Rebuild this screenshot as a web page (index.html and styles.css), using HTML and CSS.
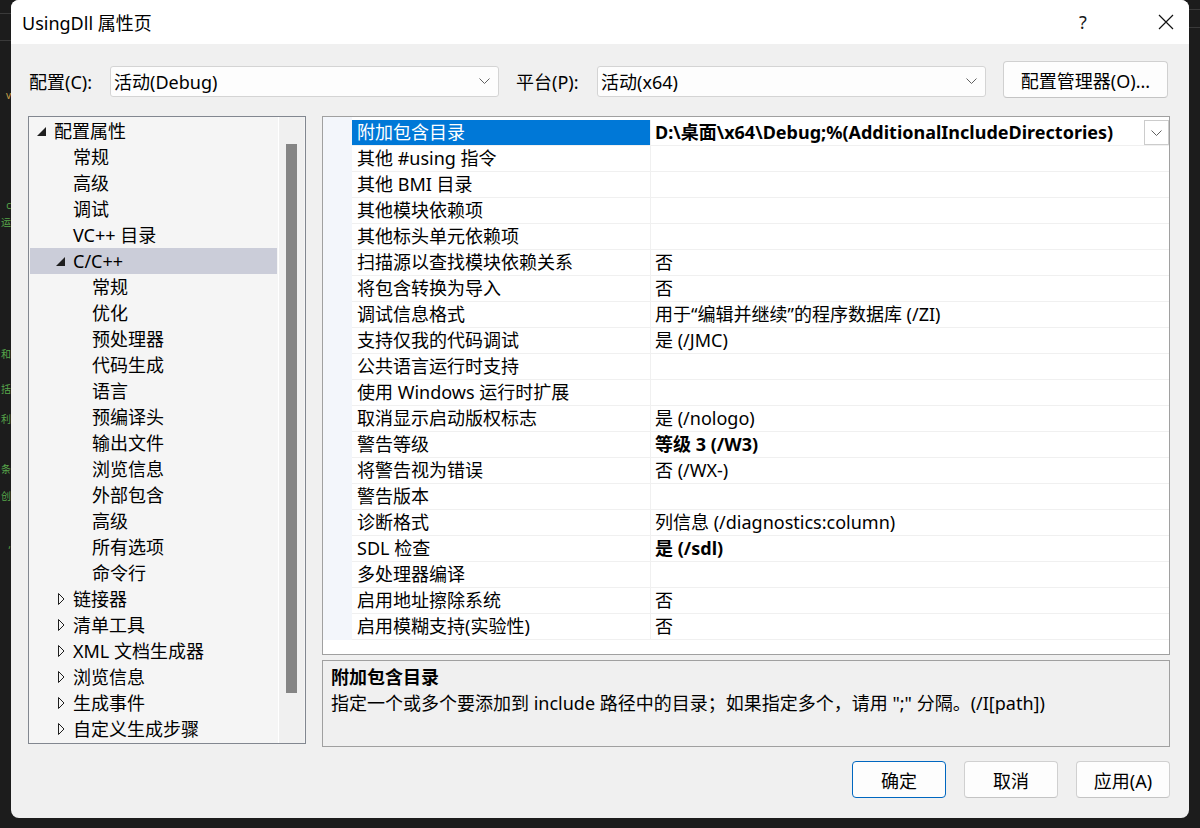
FILE: index.html
```html
<!DOCTYPE html>
<html lang="zh-CN">
<head>
    <meta charset="UTF-8">
    <title>UsingDll 属性页</title>
    <link rel="stylesheet" href="styles.css">
</head>
<body>
<div class="desk">
    <div class="edge edge-left">
        <div class="code-line warm">v</div>
        <div class="code-line">c</div>
        <div class="code-line">运</div>
        <div class="code-line">和</div>
        <div class="code-line">括</div>
        <div class="code-line">利</div>
        <div class="code-line">条</div>
        <div class="code-line">创</div>
        <div class="code-line">,</div>
    </div>

    <div class="dialog">
        <div class="titlebar">
            <span class="title">UsingDll 属性页</span>
            <span class="cap-btn help">?</span>
            <span class="cap-btn close">
                <svg width="16" height="16" viewBox="0 0 16 16"><path d="M1 1L15 15M15 1L1 15" stroke="#111" stroke-width="1.2" fill="none"/></svg>
            </span>
        </div>

        <div class="content">
            <div class="config-row">
                <label class="cfg-label">配置(C):</label>
                <div class="combo">
                    <span>活动(Debug)</span>
                    <svg class="chev" width="11" height="6" viewBox="0 0 11 6"><path d="M0.5 0.5L5.5 5.5L10.5 0.5" stroke="#606060" fill="none"/></svg>
                </div>
                <label class="cfg-label second">平台(P):</label>
                <div class="combo">
                    <span>活动(x64)</span>
                    <svg class="chev" width="11" height="6" viewBox="0 0 11 6"><path d="M0.5 0.5L5.5 5.5L10.5 0.5" stroke="#606060" fill="none"/></svg>
                </div>
                <button class="btn cfg-manager">配置管理器(O)...</button>
            </div>

            <div class="main">
                <div class="tree">
                    <ul class="tree-list">
                        <li class="node lv0"><span class="twist"><svg class="open" width="9" height="9" viewBox="0 0 9 9"><path d="M9 0L9 9L0 9Z" fill="#1e1e1e"/></svg></span>配置属性</li>
                        <li class="node lv1"><span class="twist"></span>常规</li>
                        <li class="node lv1"><span class="twist"></span>高级</li>
                        <li class="node lv1"><span class="twist"></span>调试</li>
                        <li class="node lv1"><span class="twist"></span>VC++ 目录</li>
                        <li class="node lv1 selected"><span class="twist"><svg class="open" width="9" height="9" viewBox="0 0 9 9"><path d="M9 0L9 9L0 9Z" fill="#1e1e1e"/></svg></span>C/C++</li>
                        <li class="node lv2"><span class="twist"></span>常规</li>
                        <li class="node lv2"><span class="twist"></span>优化</li>
                        <li class="node lv2"><span class="twist"></span>预处理器</li>
                        <li class="node lv2"><span class="twist"></span>代码生成</li>
                        <li class="node lv2"><span class="twist"></span>语言</li>
                        <li class="node lv2"><span class="twist"></span>预编译头</li>
                        <li class="node lv2"><span class="twist"></span>输出文件</li>
                        <li class="node lv2"><span class="twist"></span>浏览信息</li>
                        <li class="node lv2"><span class="twist"></span>外部包含</li>
                        <li class="node lv2"><span class="twist"></span>高级</li>
                        <li class="node lv2"><span class="twist"></span>所有选项</li>
                        <li class="node lv2"><span class="twist"></span>命令行</li>
                        <li class="node lv1"><span class="twist"><svg class="shut" width="7" height="12" viewBox="0 0 7 12"><path d="M0.5 0.5L6 6L0.5 11.5Z" stroke="#1e1e1e" fill="none"/></svg></span>链接器</li>
                        <li class="node lv1"><span class="twist"><svg class="shut" width="7" height="12" viewBox="0 0 7 12"><path d="M0.5 0.5L6 6L0.5 11.5Z" stroke="#1e1e1e" fill="none"/></svg></span>清单工具</li>
                        <li class="node lv1"><span class="twist"><svg class="shut" width="7" height="12" viewBox="0 0 7 12"><path d="M0.5 0.5L6 6L0.5 11.5Z" stroke="#1e1e1e" fill="none"/></svg></span>XML 文档生成器</li>
                        <li class="node lv1"><span class="twist"><svg class="shut" width="7" height="12" viewBox="0 0 7 12"><path d="M0.5 0.5L6 6L0.5 11.5Z" stroke="#1e1e1e" fill="none"/></svg></span>浏览信息</li>
                        <li class="node lv1"><span class="twist"><svg class="shut" width="7" height="12" viewBox="0 0 7 12"><path d="M0.5 0.5L6 6L0.5 11.5Z" stroke="#1e1e1e" fill="none"/></svg></span>生成事件</li>
                        <li class="node lv1"><span class="twist"><svg class="shut" width="7" height="12" viewBox="0 0 7 12"><path d="M0.5 0.5L6 6L0.5 11.5Z" stroke="#1e1e1e" fill="none"/></svg></span>自定义生成步骤</li>
                    </ul>
                    <div class="vscroll"><div class="thumb"></div></div>
                </div>

                <div class="right-col">
                    <div class="grid">
                        <div class="prop-list">
                            <div class="prop active">
                                <div class="name">附加包含目录</div>
                                <div class="value bold">D:\桌面\x64\Debug;%(AdditionalIncludeDirectories)
                                    <span class="drop"><svg width="11" height="6" viewBox="0 0 11 6"><path d="M0.5 0.5L5.5 5.5L10.5 0.5" stroke="#606060" fill="none"/></svg></span>
                                </div>
                            </div>
                            <div class="prop"><div class="name">其他 #using 指令</div><div class="value"></div></div>
                            <div class="prop"><div class="name">其他 BMI 目录</div><div class="value"></div></div>
                            <div class="prop"><div class="name">其他模块依赖项</div><div class="value"></div></div>
                            <div class="prop"><div class="name">其他标头单元依赖项</div><div class="value"></div></div>
                            <div class="prop"><div class="name">扫描源以查找模块依赖关系</div><div class="value">否</div></div>
                            <div class="prop"><div class="name">将包含转换为导入</div><div class="value">否</div></div>
                            <div class="prop"><div class="name">调试信息格式</div><div class="value">用于“编辑并继续”的程序数据库 (/ZI)</div></div>
                            <div class="prop"><div class="name">支持仅我的代码调试</div><div class="value">是 (/JMC)</div></div>
                            <div class="prop"><div class="name">公共语言运行时支持</div><div class="value"></div></div>
                            <div class="prop"><div class="name">使用 Windows 运行时扩展</div><div class="value"></div></div>
                            <div class="prop"><div class="name">取消显示启动版权标志</div><div class="value">是 (/nologo)</div></div>
                            <div class="prop"><div class="name">警告等级</div><div class="value bold">等级 3 (/W3)</div></div>
                            <div class="prop"><div class="name">将警告视为错误</div><div class="value">否 (/WX-)</div></div>
                            <div class="prop"><div class="name">警告版本</div><div class="value"></div></div>
                            <div class="prop"><div class="name">诊断格式</div><div class="value">列信息 (/diagnostics:column)</div></div>
                            <div class="prop"><div class="name">SDL 检查</div><div class="value bold">是 (/sdl)</div></div>
                            <div class="prop"><div class="name">多处理器编译</div><div class="value"></div></div>
                            <div class="prop"><div class="name">启用地址擦除系统</div><div class="value">否</div></div>
                            <div class="prop"><div class="name">启用模糊支持(实验性)</div><div class="value">否</div></div>
                        </div>
                    </div>
                    <div class="desc">
                        <div class="desc-title">附加包含目录</div>
                        <div class="desc-text">指定一个或多个要添加到 include 路径中的目录；如果指定多个，请用 ";" 分隔。(/I[path])</div>
                    </div>
                </div>
            </div>

            <div class="buttons">
                <button class="btn default">确定</button>
                <button class="btn">取消</button>
                <button class="btn">应用(A)</button>
            </div>
        </div>
    </div>

    <div class="edge edge-right"></div>
</div>
</body>
</html>
```

FILE: styles.css
```css
* {
    box-sizing: border-box;
    margin: 0;
    padding: 0;
}
body {
    background-color: #1c1c1c;
    font-family: "Segoe UI", "Noto Sans", "Noto Sans CJK SC", sans-serif;
    font-size: 18px;
    color: #000;
    width: 1200px;
    height: 828px;
    overflow: hidden;
}
.desk {
    display: flex;
    height: 828px;
}

/* editor behind the dialog */
.edge {
    width: 11px;
    flex-shrink: 0;
    overflow: hidden;
    color: #57a64a;
}
.edge-left {
    background: linear-gradient(#1c1c1c 13px, #3a3a3a 13px, #3a3a3a 14px, #1c1c1c 14px, #1c1c1c 40px, #3a3a3a 40px, #3a3a3a 41px, #1c1c1c 41px);
}
.edge-right {
    background: linear-gradient(#1c1c1c 9px, #3a3a3a 9px, #3a3a3a 10px, #1c1c1c 10px, #1c1c1c 27px, #3a3a3a 27px, #3a3a3a 28px, #1c1c1c 28px);
}
.code-line {
    height: 14px;
    line-height: 14px;
    font-size: 10px;
    text-align: right;
    white-space: nowrap;
}
.code-line.warm { color: #c8a04a; margin-top: 88px; }
.code-line:nth-child(2) { margin-top: 96px; }
.code-line:nth-child(3) { margin-top: 3px; }
.code-line:nth-child(4) { margin-top: 118px; }
.code-line:nth-child(5) { margin-top: 21px; }
.code-line:nth-child(6) { margin-top: 16px; }
.code-line:nth-child(7) { margin-top: 36px; }
.code-line:nth-child(8) { margin-top: 13px; }
.code-line:nth-child(9) { margin-top: 34px; }

/* dialog */
.dialog {
    width: 1178px;
    height: 818px;
    border-radius: 8px;
    overflow: hidden;
    background-color: #f0f0f0;
    display: flex;
    flex-direction: column;
}
.titlebar {
    height: 44px;
    background-color: #fff;
    display: flex;
    align-items: center;
    padding-left: 11px;
}
.title {
    font-size: 18px;
}
.cap-btn {
    width: 46px;
    height: 44px;
    display: flex;
    align-items: center;
    justify-content: center;
}
.help {
    margin-left: auto;
    margin-right: 37px;
    color: #1a1a1a;
}
.content {
    padding: 0 19px 0 17px;
    display: flex;
    flex-direction: column;
}

/* config row */
.config-row {
    margin-top: 17px;
    height: 37px;
    display: flex;
    align-items: center;
}
.cfg-label {
    width: 82px;
    padding-left: 1px;
    padding-top: 2px;
}
.cfg-label.second {
    margin-left: 16px;
}
.combo {
    width: 389px;
    height: 31px;
    margin-top: 3px;
    background-color: #fdfdfd;
    border: 1px solid #d4d4d4;
    border-radius: 3px;
    display: flex;
    align-items: center;
    justify-content: space-between;
    padding: 0 8px 0 3px;
}
.btn {
    font-family: inherit;
    font-size: 18px;
    color: #000;
    background-color: #fdfdfd;
    border: 1px solid #d0d0d0;
    border-bottom-color: #c4c4c4;
    border-radius: 4px;
    height: 37px;
}
.cfg-manager {
    width: 165px;
    margin-left: 17px;
}

/* main area */
.main {
    margin-top: 18px;
    display: flex;
    gap: 16px;
}
.tree {
    width: 278px;
    height: 628px;
    border: 1px solid #828790;
    background-color: #f5f5f5;
    display: flex;
}
.tree-list {
    list-style: none;
    width: 250px;
    padding: 1px;
    border-right: 1px solid #fff;
}
.node {
    height: 26px;
    line-height: 26px;
    display: flex;
    align-items: center;
    white-space: nowrap;
}
.node.lv0 { padding-left: 5px; }
.node.lv1 { padding-left: 24px; }
.node.lv2 { padding-left: 43px; }
.node.selected {
    background-color: #cbcdd9;
}
.twist {
    width: 19px;
    height: 26px;
    display: flex;
    align-items: center;
    flex-shrink: 0;
}
.twist .open { margin-left: 2px; }
.twist .shut { margin-left: 4px; }
.vscroll {
    width: 25px;
    background-color: #f0f0f0;
    padding-top: 27px;
    display: flex;
    justify-content: center;
}
.thumb {
    width: 11px;
    height: 549px;
    background-color: #858585;
}

.right-col {
    width: 848px;
    display: flex;
    flex-direction: column;
    gap: 5px;
}
.grid {
    height: 539px;
    border: 1px solid #a0a0a0;
    background-color: #fff;
}
.prop-list {
    border-left: 29px solid #f3f6fb;
    padding-top: 3px;
}
.prop {
    height: 26px;
    display: grid;
    grid-template-columns: 298px 1fr;
    border-bottom: 1px solid #f0f0f0;
}
.prop .name {
    padding-left: 5px;
    line-height: 25px;
    white-space: nowrap;
}
.prop .value {
    border-left: 1px solid #f0f0f0;
    padding-left: 4px;
    line-height: 25px;
    white-space: nowrap;
    display: flex;
}
.prop.active .name {
    background-color: #0078d7;
    color: #fff;
}
.bold {
    font-weight: 700;
}
.drop {
    margin-left: auto;
    width: 25px;
    height: 25px;
    border: 1px solid #cccccc;
    background-color: #fff;
    display: flex;
    align-items: center;
    justify-content: center;
}
.desc {
    height: 87px;
    border: 1px solid #a0a0a0;
    padding: 3px 8px 0;
    line-height: 26px;
}
.desc-title {
    font-weight: 700;
}

.buttons {
    margin-top: 14px;
    display: flex;
    justify-content: flex-end;
    gap: 18px;
}
.buttons .btn {
    width: 94px;
}
.btn.default {
    border: 1px solid #0067c0;
}
```
